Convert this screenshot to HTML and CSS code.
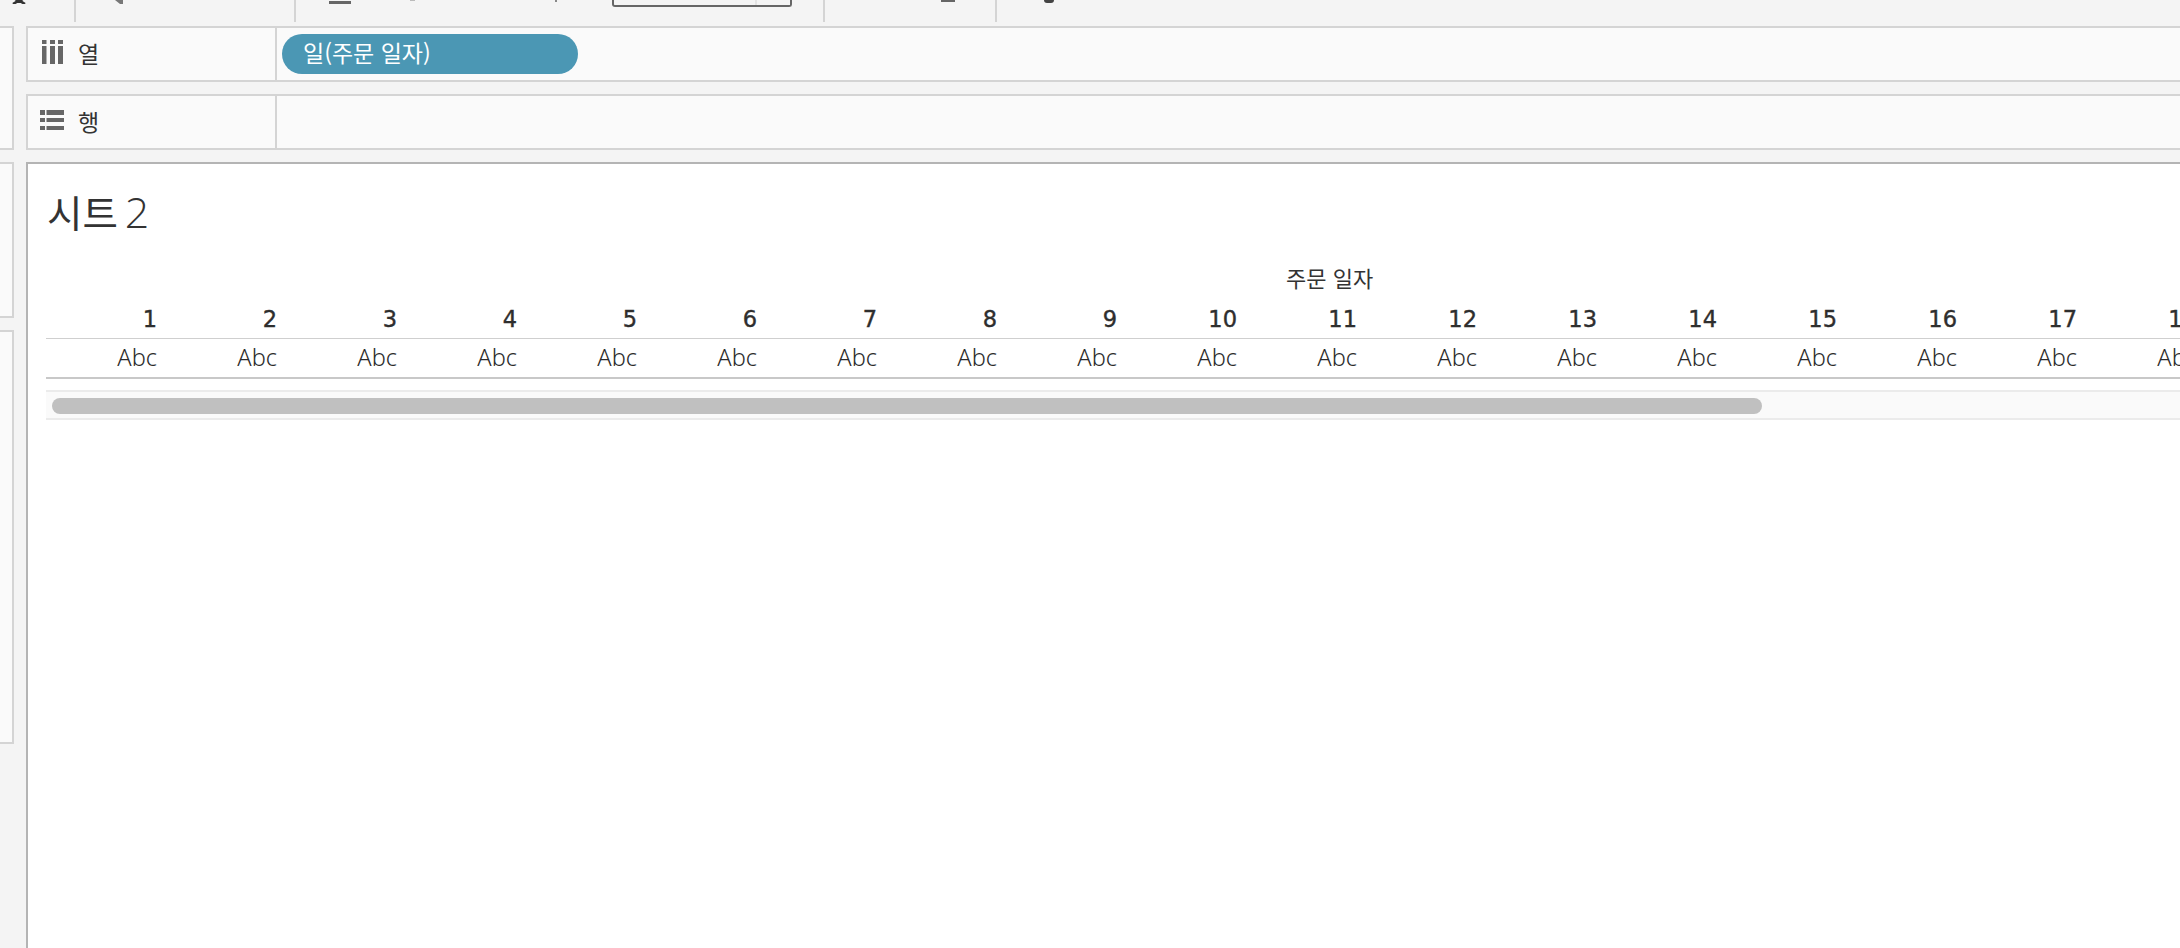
FILE: index.html
```html
<!DOCTYPE html>
<html lang="ko">
<head>
<meta charset="utf-8">
<title>시트 2</title>
<link rel="stylesheet" href="styles.css">
</head>
<body>
<div class="toolbar">
  <div class="tool tool-a"><svg class="clip-x" width="14" height="4" viewBox="0 0 14 4"><path d="M1 -3 L6 1 L1 4 M13 -3 L8 1 L13 4 M1 -3 L13 4 M13 -3 L1 4" fill="none" stroke="#333" stroke-width="2.6"/></svg></div>
  <div class="tool tool-b"><svg width="8" height="4" viewBox="0 0 8 4"><path d="M0 0 H8 V4 H5 Z" fill="#777"/></svg></div>
  <div class="tool tool-c">
    <span class="bar bar-wide"></span>
    <span class="speck speck-round"></span>
    <span class="speck speck-tick"></span>
    <div class="combo"><span class="combo-split"></span></div>
  </div>
  <div class="tool tool-d"><span class="bar bar-short"></span></div>
  <div class="tool tool-e"><span class="blob"></span></div>
</div>
<div class="layout">
  <aside class="side">
    <div class="panel panel-top"></div>
    <div class="panel panel-mid"></div>
    <div class="panel panel-low"></div>
  </aside>
  <main class="main">
    <div class="shelf">
      <div class="shelf-label">
        <svg class="shelf-icon" width="24" height="24" viewBox="0 0 24 24"><path d="M2 0h4.500v4H2zM2 6h4.500v18H2zM10 0h5v4h-5zM10 6h5v18h-5zM18 0h5v4h-5zM18 6h5v18h-5z" fill="#666"/></svg>
        <span class="shelf-name">열</span>
      </div>
      <div class="shelf-body"><span class="pill">일(주문 일자)</span></div>
    </div>
    <div class="shelf">
      <div class="shelf-label">
        <svg class="shelf-icon" width="24" height="24" viewBox="0 0 24 24"><path d="M0 2h5v5H0zM6.500 2H24v5H6.500zM0 10h5v4H0zM6.500 10H24v4H6.500zM0 18h5v4H0zM6.500 18H24v4H6.500z" fill="#666"/></svg>
        <span class="shelf-name">행</span>
      </div>
      <div class="shelf-body"></div>
    </div>
    <section class="canvas">
      <h1 class="sheet-title"><span class="title-ko">시트</span> <span class="title-num">2</span></h1>
      <div class="caption">주문 일자</div>
      <div class="grid grid-head" id="head">
        <span>1</span><span>2</span><span>3</span><span>4</span><span>5</span><span>6</span><span>7</span><span>8</span><span>9</span><span>10</span><span>11</span><span>12</span><span>13</span><span>14</span><span>15</span><span>16</span><span>17</span><span>18</span><span>19</span>
      </div>
      <div class="grid grid-body">
        <span>Abc</span><span>Abc</span><span>Abc</span><span>Abc</span><span>Abc</span><span>Abc</span><span>Abc</span><span>Abc</span><span>Abc</span><span>Abc</span><span>Abc</span><span>Abc</span><span>Abc</span><span>Abc</span><span>Abc</span><span>Abc</span><span>Abc</span><span>Abc</span><span>Abc</span>
      </div>
      <div class="scrollbar"><div class="thumb"></div></div>
    </section>
  </main>
</div>
</body>
</html>
```
FILE: styles.css
```css
* { box-sizing: border-box; }
html, body { margin: 0; height: 100%; }
body {
  width: 2180px;
  height: 948px;
  overflow: hidden;
  background: #f4f4f4;
  color: #333;
  font-family: "Noto Sans CJK KR", "Noto Sans", sans-serif;
}

/* toolbar, clipped by the top of the window */
.toolbar { display: flex; height: 26px; }
.tool { height: 22px; display: flex; align-items: flex-start; border-right: 2px solid #d4d4d4; }
.tool-a { width: 76px; padding-left: 12px; }
.tool-b { width: 220px; padding-left: 39px; }
.tool-c { width: 529px; padding-left: 33px; }
.tool-d { width: 172px; padding-left: 116px; }
.tool-e { flex: 1; border-right: 0; padding-left: 47px; }
.bar { display: block; background: #666; }
.bar-wide { width: 22px; height: 3px; margin-top: 1px; }
.bar-short { width: 14px; height: 2px; }
.speck { display: block; }
.speck-round { width: 5px; height: 1px; margin-left: 59px; background: #bbb; }
.speck-tick { width: 2px; height: 2px; margin-left: 140px; background: #888; }
.combo {
  width: 180px;
  height: 8px;
  margin-left: 55px;
  margin-top: -1px;
  padding-left: 141px;
  border: 2px solid #666;
  border-top: 0;
  border-radius: 0 0 3px 3px;
}
.combo-split { display: block; width: 2px; height: 6px; background: #e4e4e4; }
.blob { display: block; width: 10px; height: 3px; background: #444; border-radius: 0 0 5px 5px; }

/* layout */
.layout { display: flex; gap: 12px; height: 922px; }
.side { width: 14px; flex: none; display: flex; flex-direction: column; gap: 12px; }
.panel { background: #fafafa; border: 2px solid #d4d4d4; border-left: 0; }
.panel-top { height: 124px; }
.panel-mid { height: 156px; }
.panel-low { height: 414px; }
.main { flex: 1; min-width: 0; display: flex; flex-direction: column; gap: 12px; }

/* shelves */
.shelf { height: 56px; display: flex; background: #fafafa; border: 2px solid #d4d4d4; border-right: 0; flex: none; }
.shelf-label { width: 249px; flex: none; display: flex; align-items: center; padding-left: 12px; border-right: 2px solid #d4d4d4; }
.shelf-icon { flex: none; margin-bottom: 4px; }
.shelf-name { margin-left: 14px; margin-bottom: 3px; font-size: 23px; line-height: 28px; color: #333; }
.shelf-body { flex: 1; display: flex; align-items: center; padding-left: 5px; }
.pill {
  width: 296px;
  height: 40px;
  padding-left: 21px;
  border-radius: 20px;
  background: #4b97b4;
  color: #fff;
  font-size: 23px;
  line-height: 36px;
}

/* canvas */
.canvas { flex: 1; overflow: hidden; background: #fff; border: 2px solid #b4b4b4; border-right: 0; border-bottom: 0; padding-left: 18px; }
.sheet-title { margin: 21px 0 0; padding-left: 1px; height: 53px; font-weight: 400; font-size: 38.500px; line-height: 52px; word-spacing: -4px; color: #333; white-space: nowrap; }
.title-ko { font-size: 38.500px; }
.title-num { font-family: "Open Sans", sans-serif; font-weight: 300; font-size: 43px; }
.caption { margin-top: 23px; padding-left: 1240px; height: 32px; font-size: 22px; line-height: 32px; color: #333; white-space: nowrap; }
.grid { display: grid; grid-template-columns: 111px repeat(18, 120px); width: 2300px; }
.grid span { text-align: right; }
.grid-head { height: 36px; margin-top: 10px; font-family: "DejaVu Sans", sans-serif; font-size: 22.500px; font-weight: 400; -webkit-text-stroke: 0.4px #2e2e2e; line-height: 33px; color: #2e2e2e; border-bottom: 1px solid #cfcfcf; }
.grid-body { height: 40px; font-family: "Noto Sans", sans-serif; font-size: 23.600px; font-weight: 300; line-height: 36px; color: #2b2b2b; border-bottom: 2px solid #c8c8c8; }
.scrollbar { height: 30px; margin-top: 11px; padding: 6px 0 0 6px; background: #fafafa; border-top: 2px solid #ebebeb; border-bottom: 2px solid #ebebeb; }
.thumb { width: 1710px; height: 16px; border-radius: 8px; background: #c0c0c0; }
```
